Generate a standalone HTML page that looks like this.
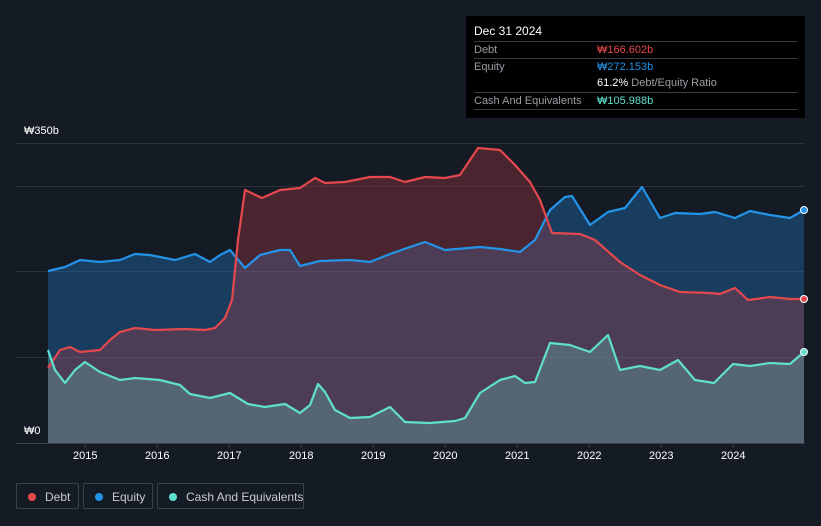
<!DOCTYPE html><html><head><meta charset="utf-8"><style>
body{margin:0;width:821px;height:526px;background:#151b25;font-family:"Liberation Sans",sans-serif;overflow:hidden;position:relative;color:#fff}
.tt{position:absolute;left:466px;top:16px;width:339px;height:102px;background:#000}
.tt .h{position:absolute;left:8px;top:8px;font-size:12px;color:#fff}
.row{position:absolute;left:8px;width:323px;border-top:1px solid #3a3d42;font-size:11px;color:#9a9ea4;height:17px;line-height:16px;white-space:nowrap}
.row span{position:absolute;left:123px}
.ax{position:absolute;font-size:11px;color:#fff;white-space:nowrap}
.leg{position:absolute;top:483px;height:26px;border:1px solid #3a4049;border-radius:2px;font-size:12px;color:#c9ccd0;line-height:26px;box-sizing:border-box;white-space:nowrap}
.leg i{position:absolute;left:11px;top:9px;width:8px;height:8px;border-radius:50%}
</style></head><body>
<div class="tt"><div class="h">Dec 31 2024</div>
<div class="row" style="top:25px">Debt<span style="color:#e5484d">₩166.602b</span></div>
<div class="row" style="top:42px">Equity<span style="color:#2394e8">₩272.153b</span></div>
<div class="row" style="top:59px;border-top:none"><span style="color:#9a9ea4"><b style="color:#fff;font-weight:normal">61.2%</b> Debt/Equity Ratio</span></div>
<div class="row" style="top:76px">Cash And Equivalents<span style="color:#5fe0cc">₩105.988b</span></div>
<div class="row" style="top:93px"></div>
</div>
<svg width="821" height="526" style="position:absolute;left:0;top:0">
<g stroke="#2a313b" stroke-width="1"><line x1="16" x2="805" y1="143.5" y2="143.5"/><line x1="16" x2="805" y1="186.5" y2="186.5"/><line x1="16" x2="805" y1="271.5" y2="271.5"/><line x1="16" x2="805" y1="357.5" y2="357.5"/></g>
<path fill="rgba(33,150,243,0.28)" d="M48,271 L65,267 L80,260 L100,262 L120,260 L135,254 L150,255 L175,260 L195,254 L210,262 L220,255 L230,250 L245,268 L260,255 L280,250 L290,250 L300,266 L320,261 L350,260 L370,262 L390,254 L410,247 L425,242 L445,250 L480,247 L500,249 L520,252 L535,240 L550,210 L565,197 L572,196 L590,225 L608,212 L625,208 L642,187 L660,218 L675,213 L700,214 L715,212 L735,218 L750,211 L770,215 L790,218 L804,210 L804,443 L48,443Z"/>
<path fill="rgba(200,60,70,0.3)" d="M48,368 L60,350 L70,347 L80,352 L100,350 L110,340 L120,332 L135,328 L155,330 L185,329 L205,330 L215,328 L225,318 L232,300 L238,240 L245,190 L262,198 L280,190 L300,188 L315,178 L325,183 L345,182 L370,177 L390,177 L405,182 L425,177 L445,178 L460,175 L478,148 L500,150 L515,165 L530,182 L540,200 L552,233 L580,234 L595,240 L620,262 L640,275 L660,285 L680,292 L710,293 L720,294 L735,288 L748,300 L770,297 L790,299 L804,299 L804,443 L48,443Z"/>
<path fill="rgba(110,200,190,0.3)" d="M48,350 L55,370 L65,383 L75,370 L85,362 L100,372 L120,380 L135,378 L160,380 L180,385 L190,394 L210,398 L230,393 L248,404 L265,407 L285,404 L300,413 L310,405 L318,384 L325,392 L335,410 L350,418 L370,417 L390,407 L405,422 L430,423 L455,421 L465,418 L480,393 L500,380 L515,376 L525,383 L535,382 L550,343 L570,345 L590,352 L608,335 L620,370 L640,366 L660,370 L678,360 L695,380 L714,383 L733,364 L750,366 L770,363 L790,364 L804,352 L804,443 L48,443Z"/>
<g fill="none" stroke-width="2.2" stroke-linejoin="round">
<path stroke="#2394e8" d="M48,271 L65,267 L80,260 L100,262 L120,260 L135,254 L150,255 L175,260 L195,254 L210,262 L220,255 L230,250 L245,268 L260,255 L280,250 L290,250 L300,266 L320,261 L350,260 L370,262 L390,254 L410,247 L425,242 L445,250 L480,247 L500,249 L520,252 L535,240 L550,210 L565,197 L572,196 L590,225 L608,212 L625,208 L642,187 L660,218 L675,213 L700,214 L715,212 L735,218 L750,211 L770,215 L790,218 L804,210"/>
<path stroke="#e5484d" d="M48,368 L60,350 L70,347 L80,352 L100,350 L110,340 L120,332 L135,328 L155,330 L185,329 L205,330 L215,328 L225,318 L232,300 L238,240 L245,190 L262,198 L280,190 L300,188 L315,178 L325,183 L345,182 L370,177 L390,177 L405,182 L425,177 L445,178 L460,175 L478,148 L500,150 L515,165 L530,182 L540,200 L552,233 L580,234 L595,240 L620,262 L640,275 L660,285 L680,292 L710,293 L720,294 L735,288 L748,300 L770,297 L790,299 L804,299"/>
<path stroke="#5fe0cc" d="M48,350 L55,370 L65,383 L75,370 L85,362 L100,372 L120,380 L135,378 L160,380 L180,385 L190,394 L210,398 L230,393 L248,404 L265,407 L285,404 L300,413 L310,405 L318,384 L325,392 L335,410 L350,418 L370,417 L390,407 L405,422 L430,423 L455,421 L465,418 L480,393 L500,380 L515,376 L525,383 L535,382 L550,343 L570,345 L590,352 L608,335 L620,370 L640,366 L660,370 L678,360 L695,380 L714,383 L733,364 L750,366 L770,363 L790,364 L804,352"/>
</g>
<circle cx="804" cy="210" r="3.5" fill="#2394e8" stroke="#fff" stroke-width="1"/>
<circle cx="804" cy="299" r="3.5" fill="#e5484d" stroke="#fff" stroke-width="1"/>
<circle cx="804" cy="352" r="3.5" fill="#5fe0cc" stroke="#fff" stroke-width="1"/>
<line x1="16" x2="805" y1="443.5" y2="443.5" stroke="#3a4049"/>
<g stroke="#3a4049"><line x1="85" x2="85" y1="443" y2="448"/><line x1="157" x2="157" y1="443" y2="448"/><line x1="229" x2="229" y1="443" y2="448"/><line x1="301" x2="301" y1="443" y2="448"/><line x1="373" x2="373" y1="443" y2="448"/><line x1="445" x2="445" y1="443" y2="448"/><line x1="517" x2="517" y1="443" y2="448"/><line x1="589" x2="589" y1="443" y2="448"/><line x1="661" x2="661" y1="443" y2="448"/><line x1="733" x2="733" y1="443" y2="448"/></g>
</svg>
<div class="ax" style="left:24px;top:125px">₩350b</div>
<div class="ax" style="left:24px;top:425px">₩0</div>
<div class="ax" style="left:73px;top:450px">2015</div><div class="ax" style="left:145px;top:450px">2016</div><div class="ax" style="left:217px;top:450px">2017</div><div class="ax" style="left:289px;top:450px">2018</div><div class="ax" style="left:361px;top:450px">2019</div><div class="ax" style="left:433px;top:450px">2020</div><div class="ax" style="left:505px;top:450px">2021</div><div class="ax" style="left:577px;top:450px">2022</div><div class="ax" style="left:649px;top:450px">2023</div><div class="ax" style="left:721px;top:450px">2024</div>
<div class="leg" style="left:16px;width:63px"><i style="background:#e5484d"></i><span style="position:absolute;left:28px">Debt</span></div>
<div class="leg" style="left:83px;width:70px"><i style="background:#2394e8"></i><span style="position:absolute;left:28px">Equity</span></div>
<div class="leg" style="left:157px;width:147px"><i style="background:#5fe0cc"></i><span style="position:absolute;left:28px">Cash And Equivalents</span></div>
</body></html>
